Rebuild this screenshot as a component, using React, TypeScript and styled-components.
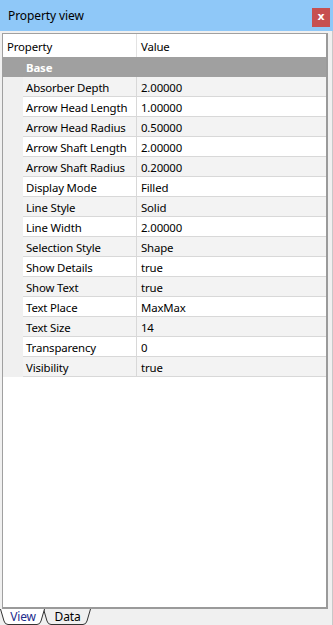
import styled, { createGlobalStyle } from "styled-components";

const GlobalStyle = createGlobalStyle`
  html, body {
    margin: 0;
    padding: 0;
    background: #f0f0f0;
  }
  * { box-sizing: border-box; }
`;

const Window = styled.div`
  width: 333px;
  height: 625px;
  display: flex;
  flex-direction: column;
  font-family: "Noto Sans", "Open Sans", sans-serif;
  font-size: 11.4px;
  letter-spacing: -0.15px;
  color: #000;
  background: #f0f0f0;
  overflow: hidden;
`;

const TitleBar = styled.div`
  height: 31px;
  flex: none;
  display: flex;
  align-items: center;
  justify-content: space-between;
  padding: 0 3px 0 8px;
  background: #8fc8f8;
`;

const Title = styled.span`
  font-size: 12px;
  letter-spacing: -0.1px;
`;

const CloseButton = styled.div`
  width: 18px;
  height: 19px;
  margin-top: 4px;
  background: #c75050;
  color: #fff;
  font-family: "DejaVu Sans", sans-serif;
  font-size: 11px;
  font-weight: bold;
  display: flex;
  align-items: center;
  justify-content: center;
  padding-bottom: 2px;
`;

const Body = styled.div`
  flex: 1;
  display: flex;
  flex-direction: column;
  padding: 2px 4px 0 2px;
  border-right: 1px solid #c8c8c8;
  min-height: 0;
`;

const GridBox = styled.div`
  flex: 1;
  background: #fff;
  border: 1px solid #a0a0a0;
  border-right: 2px solid #9a9a9a;
  border-bottom: 2px solid #9a9a9a;
  display: flex;
  flex-direction: column;
`;

const HeaderRow = styled.div`
  display: grid;
  grid-template-columns: 134px 1fr;
  height: 23px;
  align-items: stretch;
`;

const HeaderCell = styled.div<{ $divider?: boolean }>`
  display: flex;
  align-items: center;
  padding-left: 4px;
  padding-top: 1px;
  border-right: ${({ $divider }) => ($divider ? "1px solid #e3e3e3" : "none")};
`;

const CategoryRow = styled.div`
  height: 20px;
  background: #a0a0a0;
  color: #fff;
  font-weight: bold;
  display: flex;
  align-items: center;
  padding-left: 23px;
  padding-top: 1px;
`;

const PropRow = styled.div<{ $shaded: boolean }>`
  display: grid;
  grid-template-columns: 20px 114px 1fr;
  height: 20px;
  background: ${({ $shaded }) => ($shaded ? "#f3f3f3" : "#fff")};
`;

const Indent = styled.div`
  background: #f0f0f0;
`;

const Cell = styled.div<{ $divider?: boolean }>`
  display: flex;
  align-items: center;
  padding-left: ${({ $divider }) => ($divider ? "3px" : "4px")};
  padding-top: 1px;
  border-bottom: 1px solid #d8d8d8;
  border-right: ${({ $divider }) => ($divider ? "1px solid #d8d8d8" : "none")};
  white-space: nowrap;
  overflow: hidden;
`;

const TabStrip = styled.div`
  height: 16px;
  flex: none;
  display: flex;
  margin-left: -2px;
`;

const Tab = styled.div<{ $active?: boolean; $width: number }>`
  position: relative;
  width: ${({ $width }) => $width}px;
  margin-right: -3px;
  z-index: ${({ $active }) => ($active ? 2 : 1)};
  display: flex;
  align-items: center;
  justify-content: center;
  color: ${({ $active }) => ($active ? "#1c2c8c" : "#000")};
  font-size: 12px;

  svg {
    position: absolute;
    inset: 0;
  }
  span {
    position: relative;
    margin-top: -1px;
  }
`;

const rows: [string, string][] = [
  ["Absorber Depth", "2.00000"],
  ["Arrow Head Length", "1.00000"],
  ["Arrow Head Radius", "0.50000"],
  ["Arrow Shaft Length", "2.00000"],
  ["Arrow Shaft Radius", "0.20000"],
  ["Display Mode", "Filled"],
  ["Line Style", "Solid"],
  ["Line Width", "2.00000"],
  ["Selection Style", "Shape"],
  ["Show Details", "true"],
  ["Show Text", "true"],
  ["Text Place", "MaxMax"],
  ["Text Size", "14"],
  ["Transparency", "0"],
  ["Visibility", "true"],
];

function TabShape({ width, active }: { width: number; active?: boolean }) {
  const w = width;
  const d = `M0.5 0 L4 12 Q5 15.5 8 15.5 L${w - 9} 15.5 Q${w - 6} 15.5 ${w - 5} 12 L${w - 1.5} 0`;
  return (
    <svg width={w} height={16} viewBox={`0 0 ${w} 16`}>
      <path d={d + " Z"} fill={active ? "#fff" : "#f0f0f0"} stroke="none" />
      <path d={d} fill="none" stroke="#333" strokeWidth={1} />
    </svg>
  );
}

export default function App() {
  return (
    <>
      <GlobalStyle />
      <Window>
        <TitleBar>
          <Title>Property view</Title>
          <CloseButton>x</CloseButton>
        </TitleBar>
        <Body>
          <GridBox>
            <HeaderRow>
              <HeaderCell $divider>Property</HeaderCell>
              <HeaderCell>Value</HeaderCell>
            </HeaderRow>
            <CategoryRow>Base</CategoryRow>
            {rows.map(([name, value], i) => (
              <PropRow key={name} $shaded={i % 2 === 0}>
                <Indent />
                <Cell $divider>{name}</Cell>
                <Cell>{value}</Cell>
              </PropRow>
            ))}
          </GridBox>
          <TabStrip>
            <Tab $active $width={46}>
              <TabShape width={46} active />
              <span>View</span>
            </Tab>
            <Tab $width={49}>
              <TabShape width={49} />
              <span>Data</span>
            </Tab>
          </TabStrip>
        </Body>
      </Window>
    </>
  );
}
